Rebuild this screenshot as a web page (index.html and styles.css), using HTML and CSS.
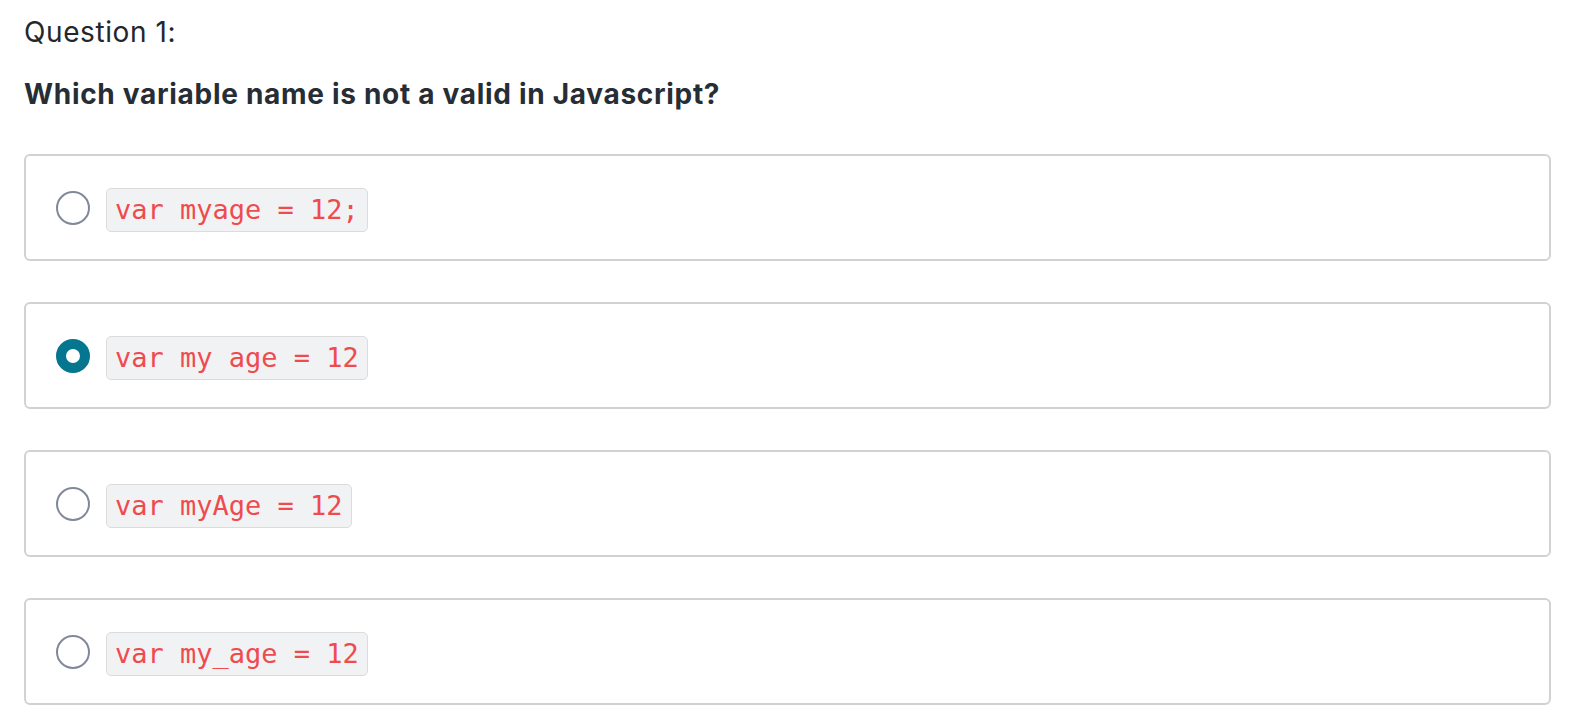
FILE: index.html
```html
<!DOCTYPE html>
<html lang="en">
<head>
<meta charset="utf-8">
<title>Question 1</title>
<link rel="stylesheet" href="styles.css">
</head>
<body>
<div class="quiz">
  <div class="q-label">Question 1:</div>
  <h2 class="q-title">Which variable name is not a valid in Javascript?</h2>
  <div class="options">
    <label class="option">
      <span class="radio"></span>
      <code class="code">var myage = 12;</code>
    </label>
    <label class="option">
      <span class="radio checked"></span>
      <code class="code">var my age = 12</code>
    </label>
    <label class="option">
      <span class="radio"></span>
      <code class="code">var myAge = 12</code>
    </label>
    <label class="option">
      <span class="radio"></span>
      <code class="code">var my_age = 12</code>
    </label>
  </div>
</div>
</body>
</html>
```
FILE: styles.css
```css
* { box-sizing: border-box; }
html, body { margin: 0; padding: 0; background: #ffffff; }
body {
  font-family: Inter, "Noto Sans", "Liberation Sans", sans-serif;
  color: #272c33;
}
.quiz {
  padding: 14px 23px 0 24px;
}
.q-label {
  font-size: 28px;
  letter-spacing: 0.6px;
  line-height: 36px;
  font-weight: 400;
  color: #23272d;
}
.q-title {
  margin: 26px 0 0 0;
  font-size: 28px;
  letter-spacing: 0.7px;
  line-height: 36px;
  font-weight: 700;
  color: #272d35;
}
.options {
  margin-top: 42px;
  display: flex;
  flex-direction: column;
  gap: 41px;
}
.option {
  display: flex;
  align-items: center;
  gap: 16px;
  height: 107px;
  padding: 0 30px;
  border: 2px solid #d2d2d2;
  border-radius: 6px;
  background: #fff;
}
.radio {
  flex: none;
  width: 34px;
  height: 34px;
  border-radius: 50%;
  border: 2px solid #808899;
  background: #fff;
}
.radio.checked {
  border: 10px solid #047690;
}
.code {
  font-family: "DejaVu Sans Mono", "Liberation Mono", monospace;
  font-size: 27px;
  line-height: 42px;
  margin-top: 5px;
  padding: 0 8px;
  color: #ef4b4f;
  background: #f1f2f4;
  border: 1px solid #dcdcdc;
  border-radius: 5px;
}
```
